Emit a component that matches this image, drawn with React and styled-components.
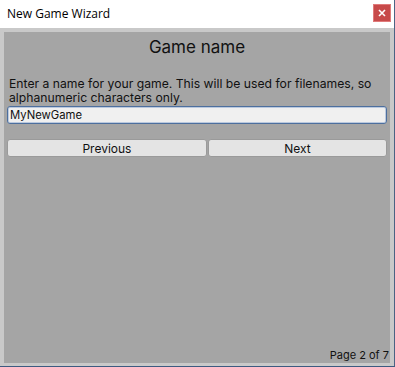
import React, { useState } from 'react';
import styled, { createGlobalStyle } from 'styled-components';

const GlobalStyle = createGlobalStyle`
    html, body {
        margin: 0;
        padding: 0;
        background: #ffffff;
    }
    * {
        box-sizing: border-box;
    }
`;

function App() {
    const [name, setName] = useState('MyNewGame');

    return (
        <WindowStyled>
            <GlobalStyle />
            <TitleBar>
                <span className="title">New Game Wizard</span>
                <CloseButton aria-label="Close">
                    <svg width="8" height="8" viewBox="0 0 8 8">
                        <path d="M1 1 L7 7 M7 1 L1 7" stroke="#ffffff" strokeWidth="1.6" />
                    </svg>
                </CloseButton>
            </TitleBar>
            <Frame>
                <Panel>
                    <Heading>Game name</Heading>
                    <Description>
                        Enter a name for your game. This will be used for filenames, so
                        alphanumeric characters only.
                    </Description>
                    <NameInput value={name} onChange={(e) => setName(e.target.value)} autoFocus />
                    <ButtonRow>
                        <NavButton $grow={200}>Previous</NavButton>
                        <NavButton $grow={179}>Next</NavButton>
                    </ButtonRow>
                    <Footer>Page 2 of 7</Footer>
                </Panel>
            </Frame>
        </WindowStyled>
    );
}

const WindowStyled = styled.div`
    width: 395px;
    height: 367px;
    display: flex;
    flex-direction: column;
    border-right: 1px solid #4b6384;
    border-bottom: 1px solid #3d5a80;
    background: #ffffff;
`;

const TitleBar = styled.div`
    height: 28px;
    display: flex;
    align-items: center;
    justify-content: space-between;
    padding: 0 2px 0 7px;
    font-family: "Open Sans", "Noto Sans", sans-serif;
    font-size: 12px;
    color: #000000;

    .title {
        margin-top: -2px;
    }
`;

const CloseButton = styled.button`
    width: 18px;
    height: 18px;
    margin-top: -3px;
    margin-right: 1px;
    border: 1px solid #e07a7a;
    background: #c74a4a;
    padding: 0;
    display: flex;
    align-items: center;
    justify-content: center;
`;

const Frame = styled.div`
    flex: 1;
    background: #c9c9c9;
    padding: 4px 4px 3px 4px;
    display: flex;
`;

const Panel = styled.div`
    flex: 1;
    background: #a5a5a5;
    display: flex;
    flex-direction: column;
    padding: 0 3px 1px 3px;
    font-family: Inter, "Noto Sans", sans-serif;
    color: #111111;
`;

const Heading = styled.h1`
    margin: 4px 0 0 0;
    font-size: 17px;
    font-weight: 400;
    text-align: center;
    line-height: 22px;
`;

const Description = styled.p`
    margin: 19px 0 0 2px;
    font-size: 12.2px;
    line-height: 14px;
`;

const NameInput = styled.input`
    margin-top: 1px;
    height: 18px;
    width: 100%;
    border: 1px solid #4d6f9e;
    border-radius: 3px;
    background: #f0f0f0;
    padding: 0 3px 0 2px;
    font-family: Inter, "Noto Sans", sans-serif;
    font-size: 11.3px;
    color: #111111;
    outline: none;
    box-shadow: inset 0 0 0 1px rgba(90, 130, 190, 0.35);
`;

const ButtonRow = styled.div`
    margin-top: 15px;
    display: flex;
    gap: 1px;
`;

const NavButton = styled.button`
    flex: ${({ $grow }) => $grow || 1};
    height: 18px;
    border: 1px solid #9a9a9a;
    border-radius: 3px;
    background: #e4e4e4;
    font-family: Inter, "Noto Sans", sans-serif;
    font-size: 12px;
    color: #111111;
    padding: 0;
`;

const Footer = styled.div`
    margin-top: auto;
    margin-right: -2px;
    text-align: right;
    font-size: 11px;
    line-height: 14px;
`;

export default App;
